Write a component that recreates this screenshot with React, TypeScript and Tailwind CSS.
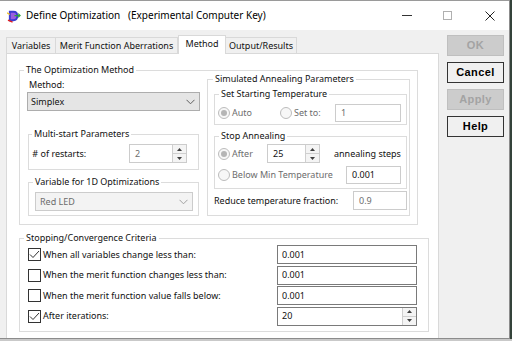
import React from 'react';

const ui = "font-['Noto_Sans','Open_Sans',sans-serif]";

function Chevron({ color = '#606060' }: { color?: string }) {
  return (
    <svg width="9" height="6" viewBox="0 0 9 6">
      <path d="M0.5 0.8 L4.5 4.8 L8.5 0.8" fill="none" stroke={color} strokeWidth="1" />
    </svg>
  );
}

function Arrows() {
  return (
    <div className="flex flex-col w-[14px] h-full border-l border-[#cfcfcf] bg-[#f4f4f4]">
      <div className="flex-1 flex items-center justify-center border-b border-[#cfcfcf]">
        <svg width="5" height="3" viewBox="0 0 5 3"><path d="M0 3 L2.5 0 L5 3 Z" fill="#404040" /></svg>
      </div>
      <div className="flex-1 flex items-center justify-center">
        <svg width="5" height="3" viewBox="0 0 5 3"><path d="M0 0 L2.5 3 L5 0 Z" fill="#404040" /></svg>
      </div>
    </div>
  );
}

function Radio({ checked }: { checked?: boolean }) {
  return (
    <div className="w-[12px] h-[12px] rounded-full border border-[#bcbcbc] bg-[#f7f7f7] flex items-center justify-center shrink-0">
      {checked && <div className="w-[6px] h-[6px] rounded-full bg-[#b5b5b5]" />}
    </div>
  );
}

function Check({ checked }: { checked?: boolean }) {
  return (
    <div className="w-[13px] h-[13px] border border-[#333333] bg-white flex items-center justify-center shrink-0">
      {checked && (
        <svg width="11" height="9" viewBox="0 0 11 9">
          <path d="M1 4.5 L4 7.5 L10 1" fill="none" stroke="#333" strokeWidth="1" />
        </svg>
      )}
    </div>
  );
}

function Group({ title, className, legendClass, children }: { title: string; className?: string; legendClass?: string; children: React.ReactNode }) {
  return (
    <fieldset className={`border border-[#dcdcdc] ${className ?? ''}`}>
      <legend className={`px-[2px] leading-[14px] ${legendClass ?? 'ml-[4px]'}`}>{title}</legend>
      {children}
    </fieldset>
  );
}

const criteria = [
  { label: 'When all variables change less than:', checked: true, value: '0.001' },
  { label: 'When the merit function changes less than:', checked: false, value: '0.001' },
  { label: 'When the merit function value falls below:', checked: false, value: '0.001' },
];

export default function App() {
  return (
    <div className={`w-[512px] h-[341px] bg-[#c9c9c9] overflow-hidden text-[9px] text-[#111] ${ui}`}>
      <div className="flex">
        <div className="w-[510px] h-[339px] bg-[#f0f0f0] border-r border-b border-[#8c8c8c] flex flex-col">
          {/* title bar */}
          <div className="h-[30px] bg-white border-t border-[#9a9a9a] flex items-center shrink-0">
            <svg className="ml-[7px]" width="14" height="14" viewBox="0 0 15 15">
              <path d="M2 2 L7 2 Q12 2 12 7.5 Q12 13 7 13 L2 13 Z" fill="#3b3bd0" />
              <path d="M4 4 L7 4 Q10 4 10 7.5 Q10 11 7 11 L4 11 Z" fill="#9a5fe0" />
              <path d="M8 7 L14 7 M12 5 L14 7 L12 9" stroke="#2aa33a" strokeWidth="1.3" fill="none" />
              <path d="M1 12 L6 14" stroke="#e02020" strokeWidth="1.5" />
              <path d="M0 4 L3 6" stroke="#f0c020" strokeWidth="1.3" />
            </svg>
            <span className="ml-[5px] text-[10px] text-black whitespace-pre">Define Optimization   (Experimental Computer Key)</span>
            <div className="ml-auto flex items-center">
              <div className="w-[10px] h-px bg-[#333] mr-[31px]" />
              <div className="w-[9px] h-[9px] border border-[#b0b0b0] mr-[33px]" />
              <svg className="mr-[14px]" width="10" height="10" viewBox="0 0 10 10">
                <path d="M0.5 0.5 L9.5 9.5 M9.5 0.5 L0.5 9.5" stroke="#222" strokeWidth="1" />
              </svg>
            </div>
          </div>

          {/* body */}
          <div className="flex flex-1 min-h-0">
            <div className="ml-[6px] w-[433px] flex flex-col">
              {/* tabs */}
              <div className="flex items-end h-[23px] pl-0">
                <div className="w-[50px] h-[16px] border border-b-0 border-[#d9d9d9] flex items-center justify-center">Variables</div>
                <div className="w-[122px] h-[16px] border border-b-0 border-l-0 border-[#d9d9d9] flex items-center justify-center">Merit Function Aberrations</div>
                <div className="relative z-10 -mb-px w-[48px] h-[19px] bg-white border border-b-0 border-[#d9d9d9] flex items-center justify-center pb-[2px]">Method</div>
                <div className="w-[71px] h-[16px] border border-b-0 border-l-0 border-[#d9d9d9] flex items-center justify-center">Output/Results</div>
              </div>

              {/* panel */}
              <div className="flex-1 bg-white border border-[#d9d9d9] border-b-0">
                <Group title="The Optimization Method" className="ml-[12px] mt-[9px] w-[399px] pb-[8px]">
                  <div className="flex items-start pl-[7px]">
                    {/* left column */}
                    <div className="w-[173px] flex flex-col">
                      <div className="mt-[1px] pl-[2px] leading-[14px]">Method:</div>
                      <div className="h-[19px] bg-[#e5e5e5] border border-[#adadad] flex items-center justify-between pl-[3px] pr-[4px]">
                        <span>Simplex</span>
                        <Chevron />
                      </div>

                      <Group title="Multi-start Parameters" className="ml-[1px] w-[171px] mt-[16px] pb-[6px]" legendClass="ml-[3px]">
                        <div className="flex items-center justify-between mt-[3px] pl-[1px] pr-[11px]">
                          <span>&nbsp;# of restarts:</span>
                          <div className="w-[58px] h-[19px] border border-[#cccccc] bg-white flex items-center">
                            <span className="flex-1 pl-[5px] text-[#6d6d6d]">2</span>
                            <Arrows />
                          </div>
                        </div>
                      </Group>

                      <Group title="Variable for 1D Optimizations" className="ml-[1px] w-[171px] mt-[5px] pb-[4px]">
                        <div className="ml-[6px] mt-[3px] w-[158px] h-[19px] bg-[#f3f3f3] border border-[#cccccc] flex items-center justify-between pl-[4px] pr-[4px] text-[#6d6d6d]">
                          <span>Red LED</span>
                          <Chevron color="#a0a0a0" />
                        </div>
                      </Group>
                    </div>

                    {/* right column */}
                    <div className="ml-[7px] w-[203px] -mt-[5px]">
                      <Group title="Simulated Annealing Parameters" className="w-full pb-[5px]" legendClass="ml-[5px]">
                        <Group title="Set Starting Temperature" className="ml-[6px] w-[193px] mt-[1px] pb-[2px]">
                          <div className="flex items-center h-[18px] mt-[3px] pl-[3px] pr-[5px]">
                            <div className="w-[62px] flex items-center gap-[2px] text-[#6d6d6d]">
                              <Radio checked />
                              <span>Auto</span>
                            </div>
                            <div className="flex items-center gap-[2px] text-[#6d6d6d]">
                              <Radio />
                              <span>Set to:</span>
                            </div>
                            <div className="ml-auto w-[66px] h-[18px] border border-[#cccccc] bg-white flex items-center pl-[5px] text-[#6d6d6d]">1</div>
                          </div>
                        </Group>

                        <Group title="Stop Annealing" className="ml-[6px] w-[193px] mt-[4px] pb-[4px]">
                          <div className="flex items-center h-[19px] mt-[1px] pl-[3px]">
                            <div className="w-[49px] flex items-center gap-[2px] text-[#6d6d6d]">
                              <Radio checked />
                              <span>After</span>
                            </div>
                            <div className="w-[53px] h-[19px] border border-[#cccccc] bg-white flex items-center">
                              <span className="flex-1 pl-[5px]">25</span>
                              <Arrows />
                            </div>
                            <span className="ml-[14px]">annealing steps</span>
                          </div>
                          <div className="flex items-center h-[18px] mt-[3px] pl-[3px] pr-[5px]">
                            <div className="flex items-center gap-[2px] text-[#6d6d6d]">
                              <Radio />
                              <span>Below Min Temperature</span>
                            </div>
                            <div className="ml-auto w-[55px] h-[18px] border border-[#cccccc] bg-white flex items-center pl-[5px]">0.001</div>
                          </div>
                        </Group>

                        <div className="flex items-center h-[19px] mt-[2px] pl-[6px] pr-[2px]">
                          <span>Reduce temperature fraction:</span>
                          <div className="ml-auto w-[54px] h-[19px] border border-[#cccccc] bg-white flex items-center pl-[5px] text-[#6d6d6d]">0.9</div>
                        </div>
                      </Group>
                    </div>
                  </div>
                </Group>

                <Group title="Stopping/Convergence Criteria" className="ml-[12px] mt-[6px] w-[410px] pb-[5px]">
                  <div className="flex flex-col gap-[1.5px]">
                    {criteria.map((c) => (
                      <div key={c.label} className="flex items-center h-[19px] pl-[8px] pr-[11px]">
                        <Check checked={c.checked} />
                        <span className="ml-[2px]">{c.label}</span>
                        <div className="ml-auto w-[140px] h-[19px] border border-[#7a7a7a] bg-white flex items-center pl-[4px]">{c.value}</div>
                      </div>
                    ))}
                    <div className="flex items-center h-[19px] pl-[8px] pr-[11px]">
                      <Check checked />
                      <span className="ml-[2px]">After iterations:</span>
                      <div className="ml-auto w-[140px] h-[19px] border border-[#7a7a7a] bg-white flex items-center">
                        <span className="flex-1 pl-[4px]">20</span>
                        <Arrows />
                      </div>
                    </div>
                  </div>
                </Group>
              </div>
            </div>

            {/* buttons */}
            <div className="ml-[8px] mt-[5px] w-[57px] flex flex-col gap-[6px] font-['Liberation_Sans',sans-serif] font-bold text-[11px] tracking-[0.4px]">
              <div className="h-[21px] bg-[#cccccc] border border-[#bfbfbf] text-[#a3a3a3] flex items-center justify-center">OK</div>
              <div className="h-[21px] bg-[#f0f0f0] border border-[#333333] text-black flex items-center justify-center">Cancel</div>
              <div className="h-[21px] bg-[#cccccc] border border-[#bfbfbf] text-[#a3a3a3] flex items-center justify-center">Apply</div>
              <div className="h-[21px] bg-[#f0f0f0] border border-[#333333] text-black flex items-center justify-center">Help</div>
            </div>
          </div>
        </div>
        <div className="w-[2px] h-[339px] bg-[#34433a]" />
      </div>
    </div>
  );
}
